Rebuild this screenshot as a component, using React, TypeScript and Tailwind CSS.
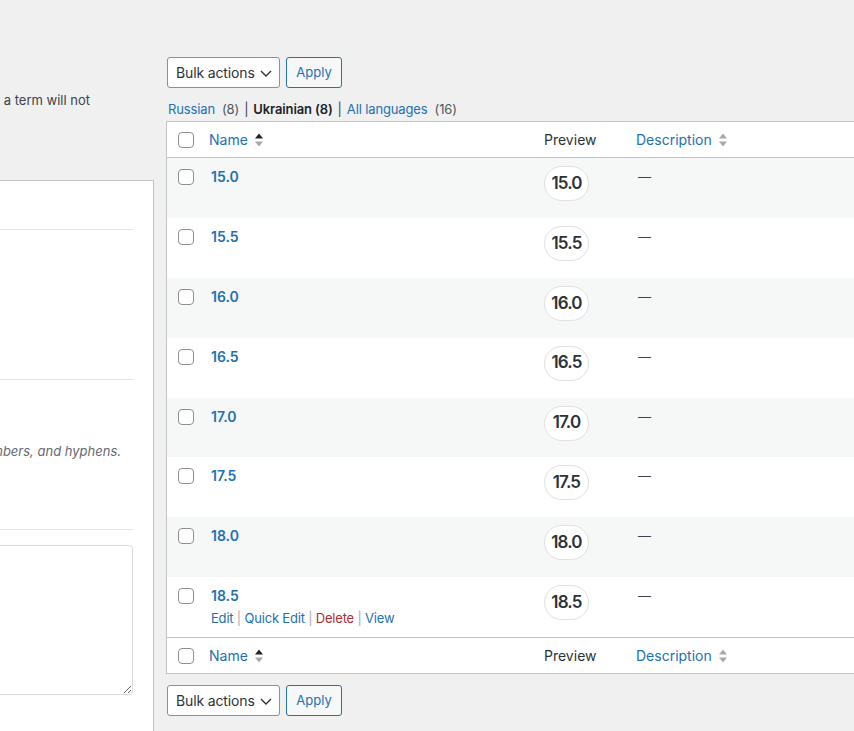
import React from 'react';

const rows = ['15.0', '15.5', '16.0', '16.5', '17.0', '17.5', '18.0', '18.5'];

function Checkbox() {
  return <span className="block w-4 h-4 border border-[#8c8f94] rounded-[4px] bg-white" />;
}

function SortIcon({ up }: { up: boolean }) {
  return (
    <svg width="8" height="14" viewBox="0 0 8 14" className="ml-[7px] shrink-0">
      <polygon points="4,0.5 8,5.5 0,5.5" fill={up ? '#1d2327' : '#a7aaad'} />
      <polygon points="0,8.5 8,8.5 4,13.5" fill="#a7aaad" />
    </svg>
  );
}

function BulkBar() {
  return (
    <div className="flex gap-[6px] ml-[1px]">
      <div className="h-[31px] w-[113px] bg-white border border-[#8c8f94] rounded-[3px] flex items-center pl-[8px] pr-[7px] justify-between text-[14px] tracking-[-0.01em] text-[#2c3338]">
        <span>Bulk actions</span>
        <svg width="12" height="7" viewBox="0 0 12 7" className="mt-[1px]">
          <path d="M1 1l5 5 5-5" fill="none" stroke="#2c3338" strokeWidth="1.4" />
        </svg>
      </div>
      <div className="h-[31px] w-[56px] bg-[#f6f7f7] border border-[#2271b1] rounded-[3px] flex items-center justify-center text-[13px] text-[#2271b1]">
        Apply
      </div>
    </div>
  );
}

function HeaderRow({ top }: { top: boolean }) {
  return (
    <div
      className={`h-[36px] flex items-center text-[14px] ${top ? 'border-b' : 'border-t'} border-[#c3c4c7]`}
    >
      <div className="w-[32px] pl-[11px] shrink-0">
        <Checkbox />
      </div>
      <div className="w-[335px] pl-[10px] shrink-0 flex items-center text-[#2271b1]">
        <span>Name</span>
        <SortIcon up />
      </div>
      <div className="w-[92px] pl-[10px] shrink-0 text-[#2c3338]">Preview</div>
      <div className="pl-[10px] flex items-center text-[#2271b1]">
        <span>Description</span>
        <SortIcon up={false} />
      </div>
    </div>
  );
}

export default function App() {
  return (
    <div className="w-[854px] h-[731px] overflow-hidden bg-[#f0f0f1] flex font-['Inter','Liberation_Sans',sans-serif] text-[13px] text-[#3c434a]">
      {/* Left column */}
      <div className="w-[154px] shrink-0 flex flex-col">
        <div className="h-[180px] pt-[90px]">
          <div className="w-[90px] flex justify-end overflow-hidden whitespace-nowrap leading-[20px]">
            <span>Note: Deleting a term will not</span>
          </div>
        </div>
        <div className="flex-1 bg-white border-t border-r border-[#c3c4c7] pr-[20px] overflow-hidden">
          <div className="h-[49px] border-b border-[#e4e4e6]" />
          <div className="h-[150px] border-b border-[#e4e4e6]" />
          <div className="h-[150px] border-b border-[#e4e4e6] pt-[61px]">
            <div className="w-[121px] flex justify-end overflow-hidden whitespace-nowrap leading-[20px] italic text-[#646970]">
              <span>It is usually all lowercase and contains only letters, numbers, and hyphens.</span>
            </div>
          </div>
          <div className="pt-[15px] -ml-[40px]">
            <textarea
              readOnly
              className="block w-[173px] h-[150px] bg-white border border-[#dcdcde] rounded-[4px]"
            />
          </div>
        </div>
      </div>

      {/* Right column */}
      <div className="ml-[12px] w-[720px] shrink-0 pt-[57px]">
        <BulkBar />
        <div className="mt-[11px] mb-[2px] h-[20px] leading-[20px] flex items-center pl-[2px] whitespace-nowrap tracking-[-0.01em]">
          <span className="text-[#2271b1]">Russian</span>
          <span className="ml-[7px] text-[#50575e]">(8)</span>
          <span className="mx-[5px] text-[#3c434a]">|</span>
          <span className="font-semibold text-[#1d2327]">Ukrainian (8)</span>
          <span className="mx-[5px] text-[#3c434a]">|</span>
          <span className="text-[#2271b1]">All languages</span>
          <span className="ml-[7px] text-[#50575e]">(16)</span>
        </div>

        <div className="bg-white border border-[#c3c4c7]">
          <HeaderRow top />
          {rows.map((r, i) => (
            <div
              key={r}
              className={`h-[59.875px] flex items-start ${i % 2 === 0 ? 'bg-[#f6f7f7]' : 'bg-white'}`}
            >
              <div className="w-[32px] pl-[11px] pt-[11px] shrink-0">
                <Checkbox />
              </div>
              <div className="w-[335px] pl-[12px] pt-[9px] shrink-0">
                <div className="text-[14px] leading-[20px] font-semibold text-[#2271b1]">{r}</div>
                {i === rows.length - 1 && (
                  <div className="mt-[2px] leading-[20px] text-[13px] whitespace-nowrap tracking-[-0.015em]">
                    <span className="text-[#2271b1]">Edit</span>
                    <span className="text-[#a7aaad]"> | </span>
                    <span className="text-[#2271b1]">Quick Edit</span>
                    <span className="text-[#a7aaad]"> | </span>
                    <span className="text-[#b32d2e]">Delete</span>
                    <span className="text-[#a7aaad]"> | </span>
                    <span className="text-[#2271b1]">View</span>
                  </div>
                )}
              </div>
              <div className="w-[92px] pl-[10px] pt-[8px] shrink-0">
                <div className="w-[45px] h-[35px] rounded-full border border-[#e0e0e0] bg-white flex items-center justify-center text-[17px] font-semibold tracking-[-0.05em] text-[#2c3338]">
                  {r}
                </div>
              </div>
              <div className="pl-[12px] pt-[9px] leading-[20px] text-[#3c434a]">—</div>
            </div>
          ))}
          <HeaderRow top={false} />
        </div>

        <div className="mt-[11px]">
          <BulkBar />
        </div>
      </div>
    </div>
  );
}
